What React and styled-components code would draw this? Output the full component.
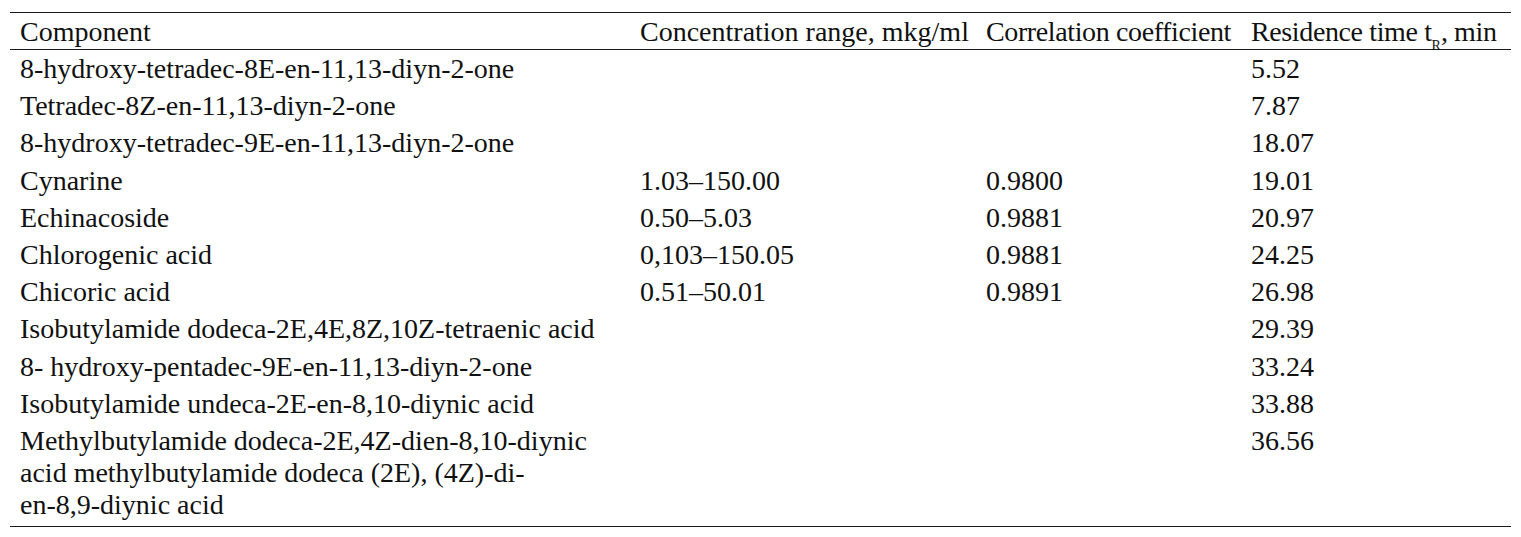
import React from "react";
import styled, { createGlobalStyle } from "styled-components";

const Global = createGlobalStyle`
  html, body { margin: 0; padding: 0; background: #fff; }
  body { font-family: "Liberation Serif", "Times New Roman", serif; color: #111; }
`;

const Page = styled.div`
  padding: 12px 10px 0 10px;
`;

const Table = styled.table`
  width: 1501px;
  border-collapse: collapse;
  table-layout: fixed;
  font-size: 28px;
  line-height: 32px;
  border-top: 1px solid #1a1a1a;
  border-bottom: 1px solid #1a1a1a;
`;

const Th = styled.th`
  font-weight: normal;
  text-align: left;
  white-space: nowrap;
  padding: 3px 0 1px 10px;
  vertical-align: top;
  letter-spacing: ${(p) => (p.$tight ? "-0.38px" : "normal")};
  border-bottom: 1px solid #1a1a1a;
`;

const Td = styled.td`
  text-align: left;
  vertical-align: top;
  padding: 3px 0 2.2px 10px;
  white-space: nowrap;
`;

const Row = styled.tr`
  &:last-child td {
    padding-bottom: 5px;
  }
`;

const Sub = styled.sub`
  font-size: 14px;
  line-height: 0;
  vertical-align: -9px;
  letter-spacing: 0;
`;

const rows = [
  ["8-hydroxy-tetradec-8E-en-11,13-diyn-2-one", "", "", "5.52"],
  ["Tetradec-8Z-en-11,13-diyn-2-one", "", "", "7.87"],
  ["8-hydroxy-tetradec-9E-en-11,13-diyn-2-one", "", "", "18.07"],
  ["Cynarine", "1.03–150.00", "0.9800", "19.01"],
  ["Echinacoside", "0.50–5.03", "0.9881", "20.97"],
  ["Chlorogenic acid", "0,103–150.05", "0.9881", "24.25"],
  ["Chicoric acid", "0.51–50.01", "0.9891", "26.98"],
  ["Isobutylamide dodeca-2E,4E,8Z,10Z-tetraenic acid", "", "", "29.39"],
  ["8- hydroxy-pentadec-9E-en-11,13-diyn-2-one", "", "", "33.24"],
  ["Isobutylamide undeca-2E-en-8,10-diynic acid", "", "", "33.88"],
  [
    [
      "Methylbutylamide dodeca-2E,4Z-dien-8,10-diynic",
      "acid methylbutylamide dodeca (2E), (4Z)-di-",
      "en-8,9-diynic acid",
    ],
    "",
    "",
    "36.56",
  ],
];

export default function App() {
  return (
    <Page>
      <Global />
      <Table>
        <colgroup>
          <col style={{ width: 620 }} />
          <col style={{ width: 346 }} />
          <col style={{ width: 265 }} />
          <col style={{ width: 270 }} />
        </colgroup>
        <thead>
          <tr>
            <Th>Component</Th>
            <Th>Concentration range, mkg/ml</Th>
            <Th $tight>Correlation coefficient</Th>
            <Th $tight>
              Residence time t<Sub>R</Sub>, min
            </Th>
          </tr>
        </thead>
        <tbody>
          {rows.map((r, i) => (
            <Row key={i}>
              <Td>
                {Array.isArray(r[0])
                  ? r[0].map((l, j) => (
                      <React.Fragment key={j}>
                        {j > 0 && <br />}
                        {l}
                      </React.Fragment>
                    ))
                  : r[0]}
              </Td>
              <Td>{r[1]}</Td>
              <Td>{r[2]}</Td>
              <Td>{r[3]}</Td>
            </Row>
          ))}
        </tbody>
      </Table>
    </Page>
  );
}
